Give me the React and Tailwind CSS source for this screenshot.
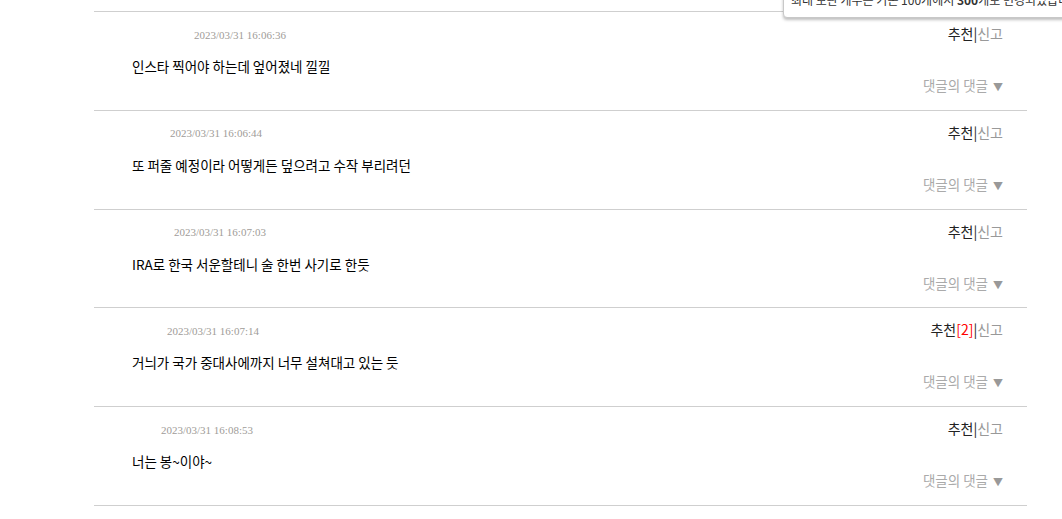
import React from 'react'

const comments = [
  { date: '2023/03/31 16:06:36', pad: 'pl-[100px]', body: '인스타 찍어야 하는데 엎어졌네 낄낄', likes: 0 },
  { date: '2023/03/31 16:06:44', pad: 'pl-[76px]', body: '또 퍼줄 예정이라 어떻게든 덮으려고 수작 부리려던', likes: 0 },
  { date: '2023/03/31 16:07:03', pad: 'pl-[80px]', body: 'IRA로 한국 서운할테니 술 한번 사기로 한듯', likes: 0 },
  { date: '2023/03/31 16:07:14', pad: 'pl-[73px]', body: '거늬가 국가 중대사에까지 너무 설쳐대고 있는 듯', likes: 2 },
  { date: '2023/03/31 16:08:53', pad: 'pl-[67px]', body: '너는 봉~이야~', likes: 0 },
]

function CommentRow({ c }) {
  return (
    <li className="border-b border-[#cfcfcf] h-[98.75px] pt-[12px] pr-[24px]">
      {/* header: date + 추천|신고 */}
      <div className="flex items-center justify-between h-[18px]">
        <span className={`${c.pad} text-[11px] text-[#a09c98] leading-none pt-[4px]`} style={{ fontFamily: '"Liberation Serif", serif' }}>
          {c.date}
        </span>
        <div className="text-[14px] leading-[18px] text-[#222]">
          추천
          {c.likes > 0 && <span className="text-[#ff0000]">[{c.likes}]</span>}
          <span className="text-[#222]">|</span>
          <span className="text-[#999]">신고</span>
        </div>
      </div>
      <p className="pl-[38px] mt-[14px] text-[13.5px] leading-[20px] text-black">{c.body}</p>
      <div className="flex justify-end">
        <span className="text-[13.5px] leading-[18px] text-[#aaa]">
          댓글의 댓글<span className="ml-[5px] text-[10px] text-[#999]">▼</span>
        </span>
      </div>
    </li>
  )
}

export default function App() {
  return (
    <div className="relative w-[1062px] h-[519px] overflow-hidden bg-white" style={{ fontFamily: '"Noto Sans CJK KR", "Noto Sans", sans-serif' }}>
      <div className="pt-[11px] pl-[94px] w-[1027px]">
        <ul className="border-t border-[#cfcfcf]">
          {comments.map((c, i) => (
            <CommentRow key={i} c={c} />
          ))}
        </ul>
      </div>

      {/* notice tooltip overlapping the top */}
      <div className="absolute left-[783px] top-[-14px] w-[320px] h-[32px] bg-white border border-[#c8c8c8] rounded-bl-[4px] shadow-[0_2px_3px_rgba(0,0,0,0.25)] pl-[7px] pt-[6px]">
        <p className="text-[12px] leading-[14px] text-[#333] whitespace-nowrap">
          최대 보관 개수는 기존 100개에서 <b>300</b>개로 변경되었습니다.
        </p>
      </div>
    </div>
  )
}
